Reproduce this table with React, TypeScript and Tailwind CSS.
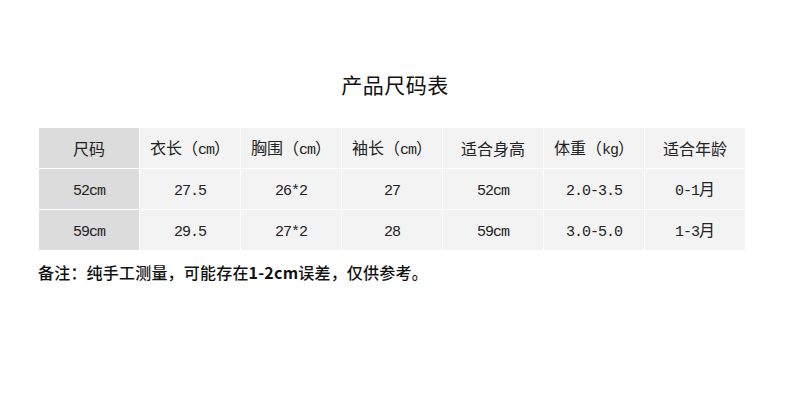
import React from "react";

const CJK = '"Noto Sans CJK SC", "Noto Sans", sans-serif';

function Mixed({ text }: { text: string }) {
  const parts = text.match(/[\x20-\x7e]+|[^\x20-\x7e]+/g) || [];
  return (
    <>
      {parts.map((p, i) =>
        /^[\x20-\x7e]+$/.test(p) ? (
          <span key={i} className="text-[15px] tracking-[-1px] font-['Liberation_Mono',monospace]">
            {p}
          </span>
        ) : (
          <span key={i} className="text-[16px] font-['Noto_Sans_CJK_SC',sans-serif]">
            {p}
          </span>
        )
      )}
    </>
  );
}

const header = ["尺码", "衣长（cm）", "胸围（cm）", "袖长（cm）", "适合身高", "体重（kg）", "适合年龄"];
const rows = [
  ["52cm", "27.5", "26*2", "27", "52cm", "2.0-3.5", "0-1月"],
  ["59cm", "29.5", "27*2", "28", "59cm", "3.0-5.0", "1-3月"],
];

export default function App() {
  const all = [header, ...rows];
  return (
    <div className="w-[790px] h-[410px] bg-white relative" style={{ fontFamily: CJK }}>
      <div className="pt-[72px] h-[96px] flex justify-center">
        <div className="h-[24px] leading-[24px] text-[21px] text-[#111] tracking-[0.5px]">产品尺码表</div>
      </div>
      <div className="mt-[32px] ml-[39px] w-[706px] grid grid-cols-[repeat(7,100px)] gap-[1px]">
        {all.map((r, ri) =>
          r.map((c, ci) => (
            <div
              key={`${ri}-${ci}`}
              className={`h-[40px] flex items-center justify-center text-[#222] leading-none ${
                ci === 0 ? "bg-[#dcdcdc]" : "bg-[#f3f3f3]"
              }`}
            >
              <span className="whitespace-nowrap">
                <Mixed text={c} />
              </span>
            </div>
          ))
        )}
      </div>
      <div className="mt-[12px] ml-[38px] h-[20px] leading-[20px] text-[16px] font-medium text-[#111] whitespace-nowrap tracking-[0.2px]">
        备注：纯手工测量，可能存在<span className="font-bold">1-2cm</span>误差，仅供参考。
      </div>
    </div>
  );
}
